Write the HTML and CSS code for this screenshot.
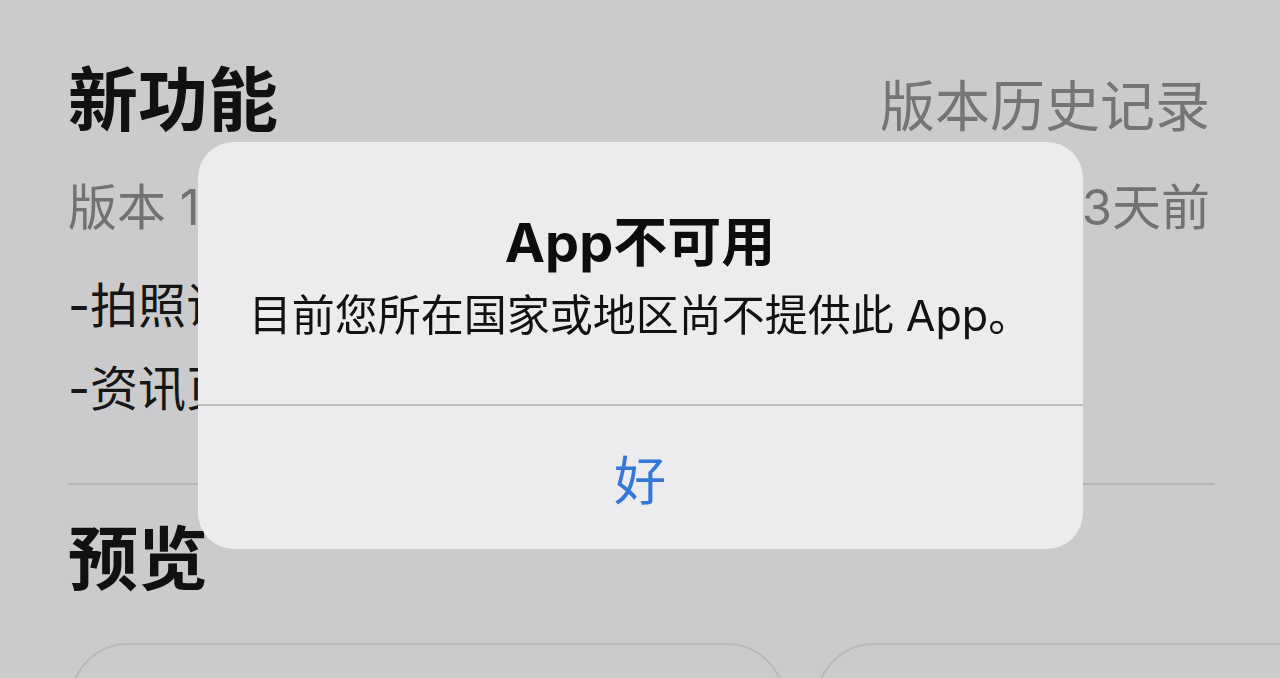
FILE: index.html
```html
<!DOCTYPE html>
<html lang="zh-CN">
<head>
  <meta charset="UTF-8">
  <meta name="viewport" content="width=device-width, initial-scale=1.0">
  <title>新功能</title>
  <link rel="stylesheet" href="styles.css">
</head>
<body>
  <div class="page">
    <div class="section-head">
      <h1 class="section-title">新功能</h1>
      <span class="section-link">版本历史记录</span>
    </div>

    <div class="version-row">
      <span>版本 13.2.1</span>
      <span>3天前</span>
    </div>

    <div class="notes">
      <p>-拍照识别功能优化，提升识别准确率</p>
      <p>-资讯页面加载优化，提升页面打开速度</p>
    </div>

    <div class="divider"></div>

    <h2 class="section-title preview-title">预览</h2>

    <div class="cards">
      <div class="card"></div>
      <div class="card"></div>
    </div>
  </div>

  <!-- alert overlay -->
  <div class="overlay">
    <div class="alert">
      <div class="alert-body">
        <div class="alert-title">App不可用</div>
        <div class="alert-msg">目前您所在国家或地区尚不提供此 App。</div>
      </div>
      <div class="alert-btn">好</div>
    </div>
  </div>
</body>
</html>
```

FILE: styles.css
```css
body {
  margin: 0;
  padding: 0;
  background-color: #cbcacc;
  font-family: "Inter", "Noto Sans CJK SC", sans-serif;
  color: #111;
  width: 100vw;
  height: 100vh;
  overflow: hidden;
}

.page {
  padding: 62px 70px 0 68px;
}

.section-head {
  display: flex;
  justify-content: space-between;
  align-items: baseline;
}

.section-title {
  margin: 0;
  font-size: 70px;
  font-weight: 700;
  line-height: 1;
}

.section-link {
  font-size: 55px;
  color: #757577;
}

.version-row {
  display: flex;
  justify-content: space-between;
  margin-top: 36px;
  font-size: 49px;
  line-height: 60px;
  color: #727274;
}

.notes {
  margin-top: 26px;
}

.notes p {
  margin: 0;
  font-size: 48px;
  line-height: 83px;
  color: #161616;
  white-space: nowrap;
}

.divider {
  margin-top: 53px;
  margin-right: -5px;
  border-top: 2px solid #b5b5b7;
}

.preview-title {
  margin-top: 40px;
}

.cards {
  display: grid;
  grid-template-columns: 715px 1fr;
  gap: 31px;
  margin-top: 48px;
  margin-right: -140px;
  margin-left: 2px;
}

.card {
  height: 200px;
  border: 2px solid #b9b9bb;
  border-radius: 58px;
}

/* alert */
.overlay {
  position: fixed;
  top: 0;
  left: 0;
  right: 0;
  bottom: 0;
  display: flex;
  justify-content: center;
  align-items: flex-start;
  padding-top: 142px;
}

.alert {
  width: 885px;
  height: 407px;
  background-color: #ececee;
  border-radius: 36px;
  display: flex;
  flex-direction: column;
  overflow: hidden;
}

.alert-body {
  height: 264px;
  border-bottom: 2px solid #bcbcbe;
  box-sizing: border-box;
  padding-top: 72px;
  text-align: center;
}

.alert-title {
  font-size: 54px;
  font-weight: 700;
  line-height: 58px;
  color: #0d0d0d;
}

.alert-msg {
  margin-top: 20px;
  font-size: 43px;
  line-height: 46px;
  color: #121212;
}

.alert-btn {
  flex: 1;
  display: flex;
  justify-content: center;
  align-items: center;
  font-size: 52px;
  color: #3577d8;
}
```
